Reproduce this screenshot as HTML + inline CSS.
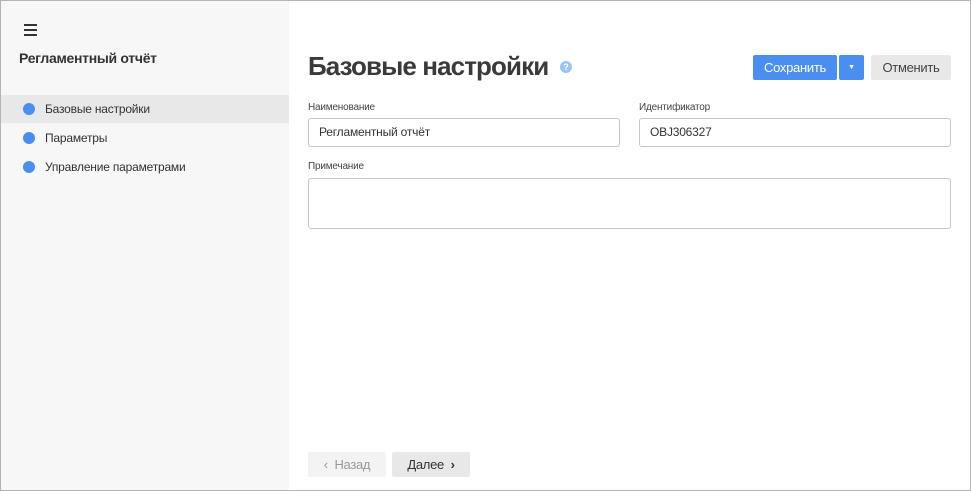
<!DOCTYPE html>
<html><head><meta charset="utf-8"><style>
*{box-sizing:border-box;margin:0;padding:0}
body{width:971px;height:491px;font-family:"Liberation Sans",sans-serif;background:#fff;position:relative;overflow:hidden;color:#333}
.frame{position:absolute;left:0;top:0;width:971px;height:491px;border:1px solid #b4b4b4;}
.side{position:absolute;left:1px;top:1px;width:288px;height:489px;background:#f7f7f7}
.ham{position:absolute;left:23px;top:23px;width:13px}
.ham i{display:block;height:2px;background:#333;margin-bottom:3px}
.stitle{position:absolute;left:18px;top:49px;font-size:14px;font-weight:bold;color:#333;letter-spacing:-.3px}
.item{position:absolute;left:0;width:288px;height:28px;font-size:12px;color:#333;line-height:28px;padding-left:44px;letter-spacing:-.2px}
.item.act{background:#e8e8e9}
.item:before{content:"";position:absolute;left:22px;top:8px;width:12px;height:12px;border-radius:50%;background:#4a8ff0}
h1{position:absolute;left:308px;top:51px;font-size:26px;font-weight:bold;color:#3a3a3a;letter-spacing:-.9px}
.help{position:absolute;left:560px;top:61px;width:12px;height:12px;border-radius:50%;background:#9cc3f5;color:#fff;font-size:9px;font-weight:bold;text-align:center;line-height:12px}
.btn{position:absolute;top:55px;height:25px;border-radius:2px;font-size:13px;line-height:25px;text-align:center;letter-spacing:-.3px}
.lbl{position:absolute;font-size:10px;color:#444;letter-spacing:-.2px}
.inp{position:absolute;border:1px solid #c6c6c6;border-radius:3px;background:#fff;font-size:12px;padding-left:10px;line-height:27px;color:#333;letter-spacing:-.2px}
</style></head><body>
<div class="side">
<div class="ham"><i></i><i></i><i></i></div>
<div class="stitle">Регламентный отчёт</div>
<div class="item act" style="top:94px">Базовые настройки</div>
<div class="item" style="top:123px">Параметры</div>
<div class="item" style="top:152px">Управление параметрами</div>
</div>
<h1>Базовые настройки</h1>
<div class="help">?</div>
<div class="btn" style="left:753px;width:84px;background:#4a8ff0;color:#fff">Сохранить</div>
<div class="btn" style="left:839px;width:25px;background:#4a8ff0;color:#fff;font-size:7px">▼</div>
<div class="btn" style="left:871px;width:80px;background:#e8e8e9;color:#444">Отменить</div>
<div class="lbl" style="left:308px;top:102px">Наименование</div>
<div class="lbl" style="left:639px;top:102px">Идентификатор</div>
<div class="inp" style="left:308px;top:118px;width:312px;height:29px">Регламентный отчёт</div>
<div class="inp" style="left:639px;top:118px;width:312px;height:29px">OBJ306327</div>
<div class="lbl" style="left:308px;top:161px">Примечание</div>
<div class="inp" style="left:308px;top:178px;width:643px;height:51px"></div>
<div class="btn" style="left:308px;top:452px;width:78px;background:#f3f3f4;color:#999">‹&nbsp; Назад</div>
<div class="btn" style="left:392px;top:452px;width:78px;background:#e8e8e9;color:#333">Далее &nbsp;<b>›</b></div>
<div class="frame"></div>
</body></html>
